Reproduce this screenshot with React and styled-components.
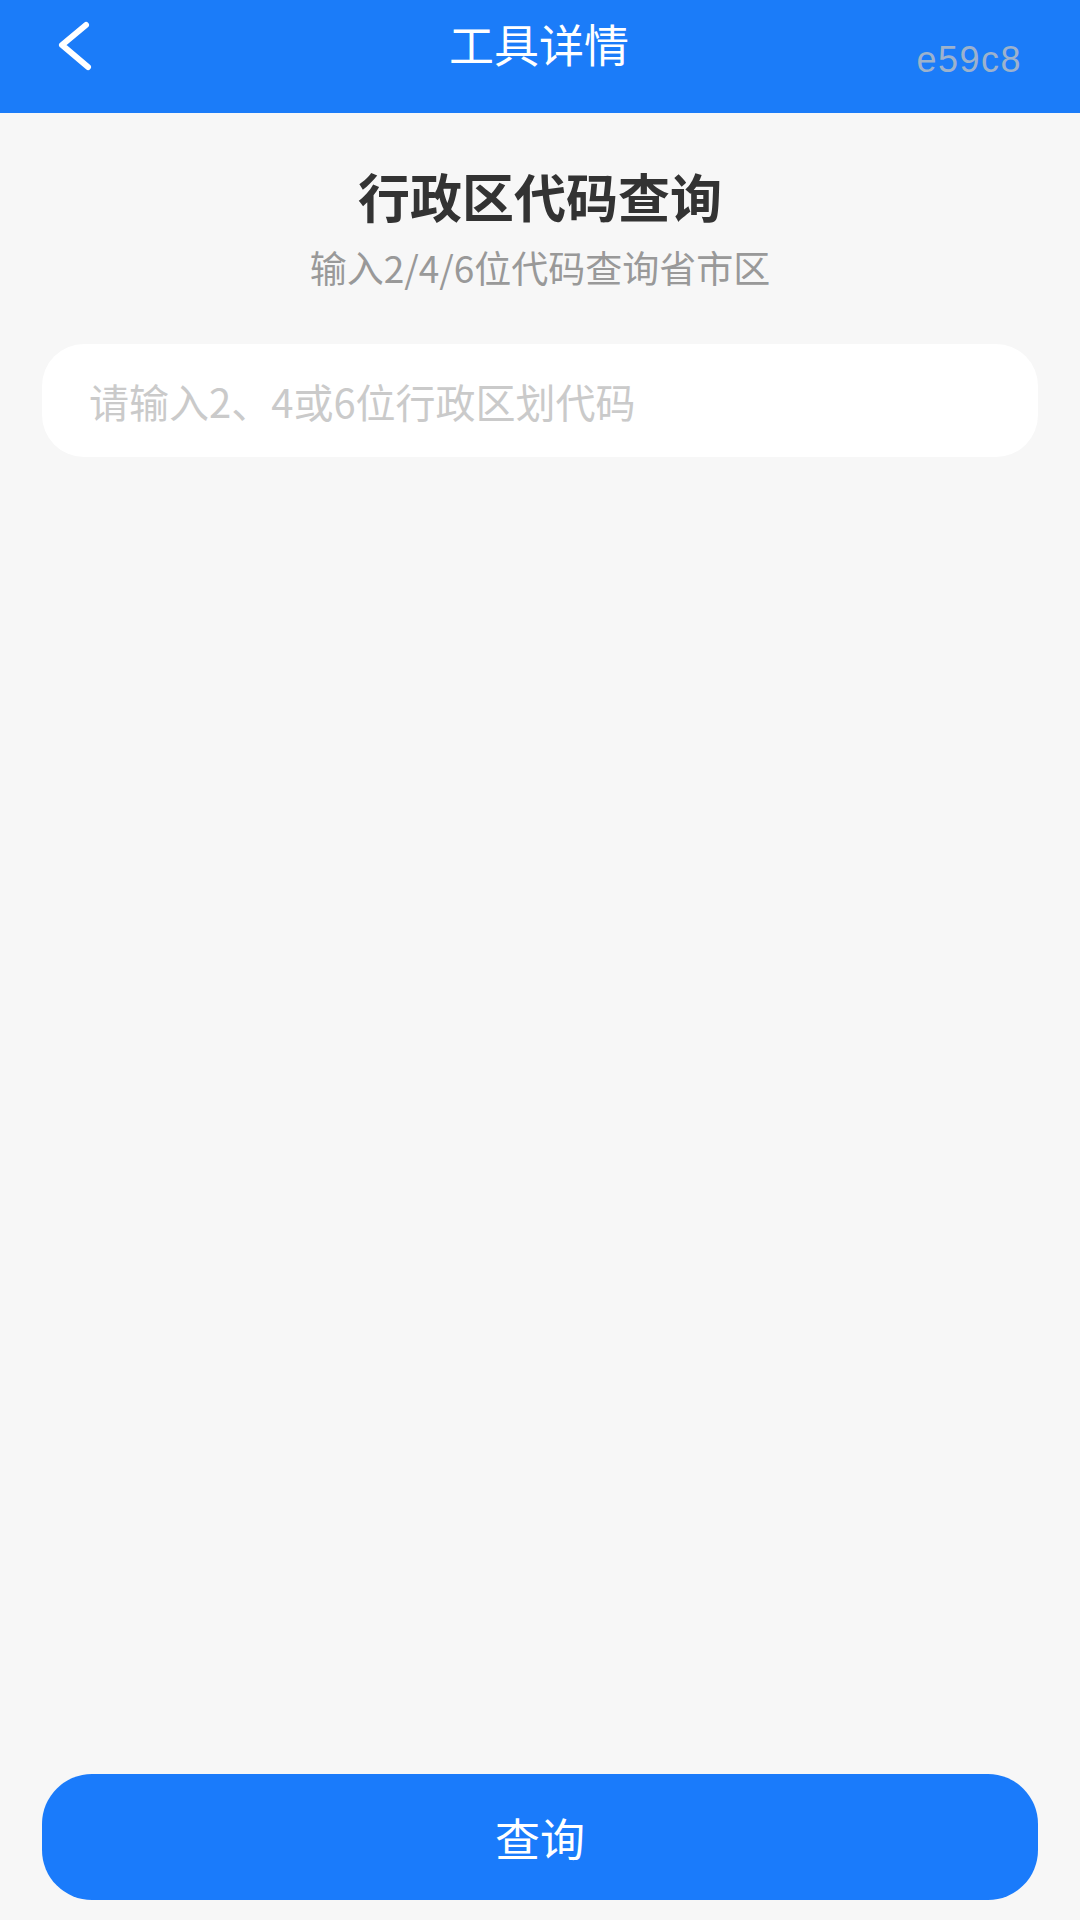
import React from "react";
import styled, { createGlobalStyle } from "styled-components";

const Global = createGlobalStyle`
  html, body { margin: 0; padding: 0; background: #f7f7f7; }
  * { box-sizing: border-box; }
  body { font-family: "Noto Sans CJK SC", "Noto Sans", sans-serif; }
`;

const Page = styled.div`
  width: 1080px;
  height: 1920px;
  display: flex;
  flex-direction: column;
  background: #f7f7f7;
`;

const Header = styled.header`
  height: 113px;
  background: #1b7cf9;
  display: grid;
  grid-template-columns: 1fr auto 1fr;
  align-items: start;
  padding: 0 58px 0 56px;
`;

const BackButton = styled.button`
  justify-self: start;
  margin-top: 21px;
  width: 40px;
  height: 50px;
  padding: 0;
  border: none;
  background: transparent;
  display: flex;
  align-items: center;
  justify-content: flex-start;
`;

const HeaderTitle = styled.h1`
  margin: 21px 0 0;
  font-size: 45px;
  line-height: 45px;
  font-weight: 400;
  color: #ffffff;
  font-family: "Noto Sans CJK SC", sans-serif;
`;

const Code = styled.span`
  justify-self: end;
  margin-top: 42px;
  font-family: "Liberation Sans", Arial, sans-serif;
  font-size: 36px;
  line-height: 36px;
  letter-spacing: 1.5px;
  color: #9db2cc;
`;

const Content = styled.main`
  flex: 1;
  display: flex;
  flex-direction: column;
  align-items: center;
  padding: 0 42px;
`;

const Title = styled.h2`
  margin: 57px 0 0;
  font-size: 52px;
  line-height: 52px;
  font-weight: 700;
  color: #333333;
`;

const Subtitle = styled.p`
  margin: 27px 0 0;
  font-size: 37px;
  line-height: 37px;
  color: #999999;
`;

const InputBox = styled.div`
  margin-top: 58px;
  width: 100%;
  height: 113px;
  border-radius: 42px;
  background: #ffffff;
  display: flex;
  align-items: center;
  padding: 0 47px;
`;

const Input = styled.input`
  width: 100%;
  border: none;
  outline: none;
  background: transparent;
  font-family: "Noto Sans CJK SC", sans-serif;
  font-size: 40px;
  color: #333;
  padding: 0;
  &::placeholder { color: #cacaca; }
`;

const Footer = styled.div`
  padding: 0 42px 20px;
`;

const QueryButton = styled.button`
  width: 100%;
  height: 126px;
  border: none;
  border-radius: 50px;
  background: #1a7bfb;
  color: #ffffff;
  font-family: "Noto Sans CJK SC", sans-serif;
  font-size: 45px;
  display: flex;
  align-items: center;
  justify-content: center;
`;

export default function App() {
  return (
    <Page>
      <Global />
      <Header>
        <BackButton aria-label="返回">
          <svg width="40" height="50" viewBox="0 0 40 50">
            <path d="M30 4 L6 24 L32 46" fill="none" stroke="#ffffff" strokeWidth="6" strokeLinecap="round" strokeLinejoin="round" />
          </svg>
        </BackButton>
        <HeaderTitle>工具详情</HeaderTitle>
        <Code>e59c8</Code>
      </Header>
      <Content>
        <Title>行政区代码查询</Title>
        <Subtitle>输入2/4/6位代码查询省市区</Subtitle>
        <InputBox>
          <Input placeholder="请输入2、4或6位行政区划代码" />
        </InputBox>
      </Content>
      <Footer>
        <QueryButton>查询</QueryButton>
      </Footer>
    </Page>
  );
}
